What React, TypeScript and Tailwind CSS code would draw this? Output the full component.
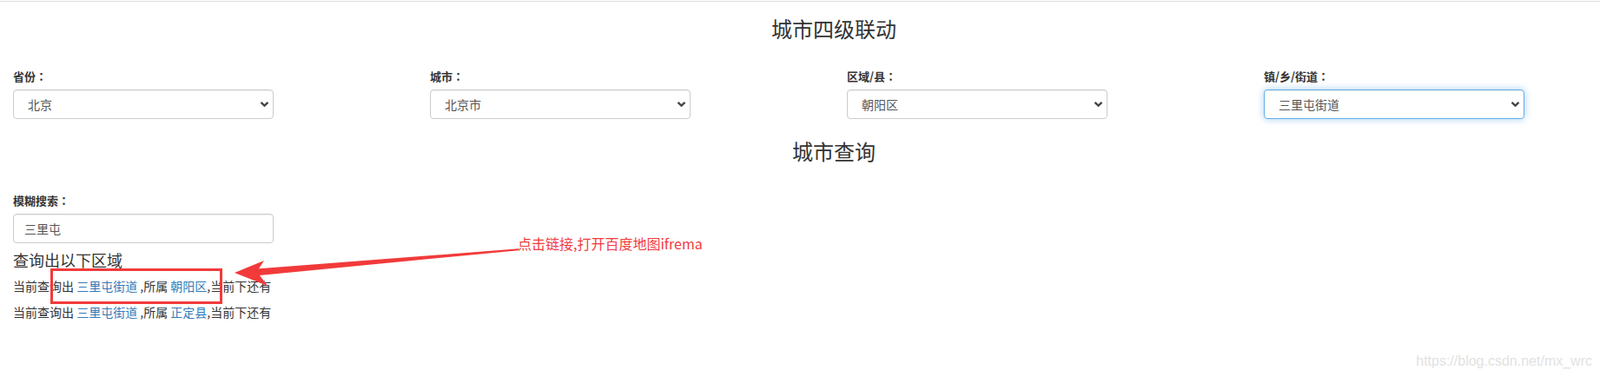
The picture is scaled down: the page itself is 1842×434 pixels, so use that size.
import React from "react";

const font = "font-['Noto_Sans_CJK_SC',sans-serif]";

function Chevron() {
  return (
    <svg
      className="pointer-events-none absolute right-[5px] top-1/2 -translate-y-1/2"
      width="11"
      height="8"
      viewBox="0 0 11 8"
    >
      <path d="M1.5 1.8 L5.5 5.6 L9.5 1.8" fill="none" stroke="#444" strokeWidth="2.3" />
    </svg>
  );
}

function Colon() {
  return <span className="font-['Noto_Sans_CJK_TC',sans-serif]">：</span>;
}

function SelectField({ label, value, focused }: { label: string; value: string; focused?: boolean }) {
  return (
    <div className="w-[480px] px-[15px]">
      <label className="mb-[5px] block text-[13px] font-bold leading-5 text-[#333]">
        {label}
        <Colon />
      </label>
      <div className="relative w-[300px]">
        <select
          defaultValue={value}
          className={
            focused
              ? "block h-[34px] w-[300px] appearance-none rounded-[4px] border border-[#66afe9] bg-white pl-4 text-[14px] text-[#555] shadow-[inset_0_1px_1px_rgba(0,0,0,0.075),0_0_8px_rgba(102,175,233,0.6)] outline-none"
              : "block h-[34px] w-[300px] appearance-none rounded-[4px] border border-[#ccc] bg-white pl-4 text-[14px] text-[#555] shadow-[inset_0_1px_1px_rgba(0,0,0,0.075)] outline-none"
          }
        >
          <option value={value}>{value}</option>
        </select>
        <Chevron />
      </div>
    </div>
  );
}

export default function App() {
  return (
    <div className={`relative h-[434px] w-full overflow-hidden bg-white ${font} text-[#333]`}>
      <div className="mt-px h-px w-full bg-[#dedede]" />
      <div className="w-[1920px]">
        <h3 className="mt-[18px] text-center text-[24px] font-normal leading-[26px]">城市四级联动</h3>
        <div className="mt-[32px] flex">
          <SelectField label="省份" value="北京" />
          <SelectField label="城市" value="北京市" />
          <SelectField label="区域/县" value="朝阳区" />
          <SelectField label="镇/乡/街道" value="三里屯街道" focused />
        </div>
        <h3 className="mt-[24px] text-center text-[24px] font-normal leading-[26px]">城市查询</h3>
        <div className="mt-[34px] px-[15px]">
          <label className="mb-[5px] block text-[13px] font-bold leading-5">
            模糊搜索
            <Colon />
          </label>
          <input
            defaultValue="三里屯"
            className="block h-[34px] w-[300px] rounded-[4px] border border-[#ccc] bg-white px-3 text-[14px] text-[#555] shadow-[inset_0_1px_1px_rgba(0,0,0,0.075)] outline-none"
          />
          <div className="mt-[6px] text-[18px] leading-[26px]">查询出以下区域</div>
          <div className="mt-[7px] text-[14px] leading-5">
            <p className="mb-[10px]">
              当前查询出 <a className="text-[#337ab7]">三里屯街道</a> ,所属 <a className="text-[#337ab7]">朝阳区</a>,当前下还有
            </p>
            <p className="mb-[10px]">
              当前查询出 <a className="text-[#337ab7]">三里屯街道</a> ,所属 <a className="text-[#337ab7]">正定县</a>,当前下还有
            </p>
          </div>
        </div>
      </div>

      {/* annotation overlay */}
      <div className="pointer-events-none absolute left-[58px] top-[309px] h-[41px] w-[198px] border-[3px] border-[#f23a3a]" />
      <svg className="pointer-events-none absolute left-0 top-0" width="1842" height="434">
        <polygon
          points="270,314 304,300 298,309.3 597,286.3 597,288.2 299,317 308,329"
          fill="#f23a3a"
        />
      </svg>
      <div className="absolute left-[596px] top-[268px] text-[16px] leading-6 text-[#f23a3a]">
        点击链接,打开百度地图ifrema
      </div>
      <div className="absolute right-[9px] top-[406px] font-['Liberation_Sans',sans-serif] text-[16px] leading-5 text-[#e2e2e2]">
        https://blog.csdn.net/mx_wrc
      </div>
    </div>
  );
}
